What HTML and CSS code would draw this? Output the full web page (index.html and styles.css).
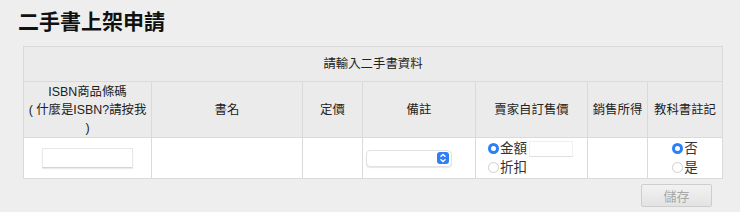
FILE: index.html
```html
<!DOCTYPE html>
<html lang="zh-Hant">
<head>
    <meta charset="UTF-8">
    <title>二手書上架申請</title>
    <link rel="stylesheet" href="styles.css">
</head>
<body>
    <h2 class="page-title">二手書上架申請</h2>
    <table class="book-table">
        <colgroup>
            <col class="col-isbn">
            <col class="col-name">
            <col class="col-price">
            <col class="col-note">
            <col class="col-sell">
            <col class="col-income">
            <col class="col-text">
        </colgroup>
        <tr>
            <th colspan="7" class="caption-cell">請輸入二手書資料</th>
        </tr>
        <tr class="head-row">
            <th>ISBN商品條碼<br>( 什麼是ISBN?請按我<br>)</th>
            <th>書名</th>
            <th>定價</th>
            <th>備註</th>
            <th>賣家自訂售價</th>
            <th>銷售所得</th>
            <th>教科書註記</th>
        </tr>
        <tr class="data-row">
            <td><input type="text" class="isbn-input"></td>
            <td></td>
            <td></td>
            <td>
                <div class="fake-select"><span class="select-arrow">
                    <svg width="8" height="10" viewBox="0 0 8 10"><path d="M1.5 3.8 L4 1.5 L6.5 3.8 M1.5 6.2 L4 8.5 L6.5 6.2" fill="none" stroke="#fff" stroke-width="1.3"/></svg>
                </span></div>
            </td>
            <td class="price-cell">
                <div class="radio-line"><span class="radio on"></span>金額<input type="text" class="amount-input"></div>
                <div class="radio-line"><span class="radio"></span>折扣</div>
            </td>
            <td></td>
            <td class="radio-cell">
                <div class="radio-line"><span class="radio on"></span>否</div>
                <div class="radio-line"><span class="radio"></span>是</div>
            </td>
        </tr>
    </table>
    <div class="actions">
        <button class="save-button" disabled>儲存</button>
    </div>
</body>
</html>
```

FILE: styles.css
```css
body {
    margin: 0;
    padding: 10px 18px 0 18px;
    background-color: #eeeeee;
    font-family: "Liberation Sans", "Noto Sans CJK TC", sans-serif;
    color: #222;
}
.page-title {
    margin: 0 0 12px 0;
    font-size: 21px;
    line-height: 24px;
    font-weight: bold;
    color: #111;
}
.book-table {
    margin-left: 5px;
    width: 699px;
    border-collapse: collapse;
    table-layout: fixed;
    font-size: 12.4px;
    line-height: 18px;
}
.book-table th, .book-table td {
    border: 1px solid #dadada;
    padding: 0;
    text-align: center;
}
.book-table th {
    background-color: #ebebeb;
    font-weight: normal;
}
.caption-cell {
    height: 34px;
}
.head-row th {
    height: 55px;
}
.col-isbn { width: 128px; }
.col-name { width: 151px; }
.col-price { width: 60px; }
.col-note { width: 113px; }
.col-sell { width: 112px; }
.col-income { width: 60px; }
.col-text { width: 75px; }
.data-row td {
    background-color: #fff;
    height: 40px;
}
.isbn-input {
    display: block;
    margin: 0 auto;
    width: 91px;
    height: 20px;
    padding: 0;
    border: 1px solid #e8e8e8;
    border-bottom-color: #d4d4d4;
    box-sizing: border-box;
    box-shadow: 0 1px 1px rgba(0, 0, 0, 0.08);
}
.fake-select {
    margin-left: 3px;
    width: 82px;
    height: 15px;
    border: 1px solid #e2e2e2;
    border-radius: 4px;
    background-color: #fff;
    box-shadow: 0 1px 1px rgba(0, 0, 0, 0.1);
    display: flex;
    justify-content: flex-end;
    align-items: center;
    padding-right: 2px;
}
.select-arrow {
    width: 12px;
    height: 12px;
    border-radius: 3px;
    background-color: #2f7ef5;
    display: flex;
    align-items: center;
    justify-content: center;
}
.price-cell {
    text-align: left !important;
    padding-left: 12px !important;
}
.radio-line {
    display: flex;
    align-items: center;
    height: 19px;
    font-size: 13.5px;
    color: #333;
}
.radio-cell .radio-line {
    justify-content: center;
}
.radio {
    width: 9px;
    height: 9px;
    border-radius: 50%;
    border: 1px solid #cfcfcf;
    background-color: #fff;
    margin-right: 1px;
    box-sizing: content-box;
}
.radio.on {
    border: 3px solid #2d7ff6;
    width: 5px;
    height: 5px;
}
.amount-input {
    margin-left: 2px;
    width: 44px;
    height: 16px;
    padding: 0;
    border: 1px solid #f0f0f0;
    border-bottom-color: #e0e0e0;
    box-sizing: border-box;
}
.actions {
    width: 704px;
    display: flex;
    justify-content: flex-end;
    padding-top: 5px;
}
.save-button {
    width: 71px;
    height: 23px;
    margin-right: 10px;
    font-family: "Noto Sans CJK TC", sans-serif;
    font-size: 13px;
    line-height: 21px;
    color: #a8a8a8;
    background: linear-gradient(#f2f2f2, #e3e3e3);
    border: 1px solid #cdcdcd;
    border-radius: 2px;
    padding: 0;
}
```
